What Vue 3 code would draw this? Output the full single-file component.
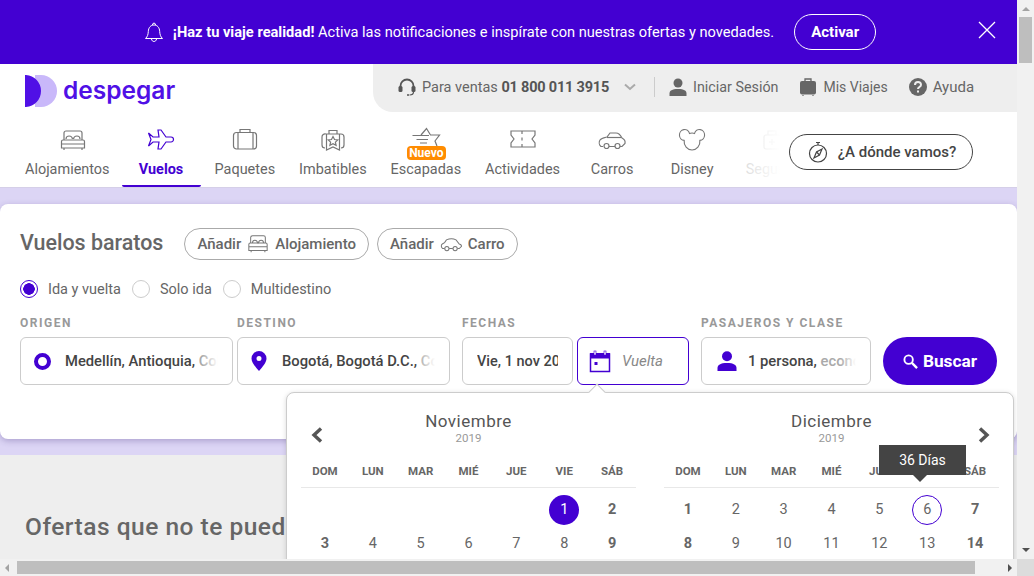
<script setup>
const tabs = [
  { id: 'bed', label: 'Alojamientos' },
  { id: 'plane', label: 'Vuelos', active: true },
  { id: 'case', label: 'Paquetes' },
  { id: 'deal', label: 'Imbatibles' },
  { id: 'star', label: 'Escapadas', badge: 'Nuevo' },
  { id: 'ticket', label: 'Actividades' },
  { id: 'car', label: 'Carros' },
  { id: 'mouse', label: 'Disney' },
  { id: 'shield', label: 'Seguros' }
]
const head = ['DOM', 'LUN', 'MAR', 'MIÉ', 'JUE', 'VIE', 'SÁB']
const months = [
  { name: 'Noviembre', weeks: ['', '', '', '', '', '1', '2', '3', '4', '5', '6', '7', '8', '9'] },
  { name: 'Diciembre', weeks: ['1', '2', '3', '4', '5', '6', '7', '8', '9', '10', '11', '12', '13', '14'] }
]
const isBold = (i) => i % 7 === 0 || i % 7 === 6
const dayClass = (m, d, i) => ({
  bold: isBold(i),
  start: m === 0 && d === '1',
  end: m === 1 && d === '6'
})
</script>

<template>
  <div class="window">
    <div class="viewport">
      <section class="banner">
        <svg class="bell" viewBox="0 0 20 22" width="20" height="22">
          <path d="M1.5 17.500c2-2 2.600-3.600 2.800-7 .2-4 2.400-6.500 5.700-6.500s5.500 2.500 5.700 6.500c.2 3.400.8 5 2.800 7z M8.500 4c-.5-2.500 3.500-2.500 3 0 M7.500 18c.3 3.300 4.700 3.300 5 0" fill="none" stroke="#fff" stroke-width="1"/>
        </svg>
        <p class="banner-text"><b>¡Haz tu viaje realidad!</b> Activa las notificaciones e inspírate con nuestras ofertas y novedades.</p>
        <button class="activate">Activar</button>
        <svg class="close" viewBox="0 0 18 18" width="18" height="18">
          <path d="M1 1l16 16M17 1L1 17" stroke="#fff" stroke-width="1.300" fill="none"/>
        </svg>
      </section>

      <header class="top">
        <div class="logo">
          <svg viewBox="0 0 32 32" width="32" height="32">
            <path d="M10 0h6a16 16 0 0 1 0 32h-6z" fill="#c9b8fa"/>
            <path d="M0 0h1a16 16 0 0 1 15 16a16 16 0 0 1-15 16H0z" fill="#5010e6"/>
          </svg>
          <span class="logo-word">despegar</span>
        </div>
        <div class="utility">
          <svg class="u-icon" viewBox="0 0 18 18" width="18" height="18">
            <path d="M2.500 9.500V8a6.500 6.500 0 0 1 13 0v1.500" fill="none" stroke="#555" stroke-width="1.800"/>
            <rect x="0.500" y="8" width="4" height="6" rx="1.500" fill="#555"/>
            <rect x="13.500" y="8" width="4" height="6" rx="1.500" fill="#555"/>
            <path d="M15.500 14c0 2-1.500 3-4 3" fill="none" stroke="#555" stroke-width="1.200"/>
            <circle cx="10" cy="17" r="1" fill="#555"/>
          </svg>
          <span class="sales">Para ventas <b>01 800 011 3915</b></span>
          <svg class="chev" viewBox="0 0 12 8" width="12" height="8"><path d="M1 1.500l5 4.500 5-4.500" fill="none" stroke="#aaa" stroke-width="2"/></svg>
          <i class="divider"></i>
          <svg class="u-icon" viewBox="0 0 18 18" width="18" height="18">
            <circle cx="9" cy="5" r="4.500" fill="#666"/>
            <path d="M.500 18v-2.500c0-3 2.500-4.500 8.500-4.500s8.500 1.500 8.500 4.500V18z" fill="#666"/>
          </svg>
          <span class="u-link login">Iniciar Sesión</span>
          <svg class="u-icon" viewBox="0 0 18 18" width="18" height="18">
            <path d="M6 3V1h6v2" fill="none" stroke="#666" stroke-width="1.300"/>
            <rect x="1" y="3" width="16" height="13.500" rx="2" fill="#666"/>
            <path d="M4 17v1M14 17v1" stroke="#666" stroke-width="1.200"/>
          </svg>
          <span class="u-link trips">Mis Viajes</span>
          <svg class="u-icon" viewBox="0 0 18 18" width="18" height="18">
            <circle cx="9" cy="9" r="9" fill="#666"/>
            <path d="M6 7c0-4 6-4 6-.300 0 2.300-3 2.300-3 4.300" fill="none" stroke="#eee" stroke-width="2"/>
            <rect x="8" y="12.500" width="2" height="2" fill="#eee"/>
          </svg>
          <span class="u-link help">Ayuda</span>
        </div>
      </header>

      <nav class="nav">
        <div class="tabs">
          <a v-for="t in tabs" :key="t.id" class="tab" :class="{ active: t.active }">
            <span class="tab-icon" :class="'i-' + t.id">
              <svg viewBox="0 0 28 22" width="28" height="22" fill="none" stroke="currentColor" stroke-width="1.200">
                <template v-if="t.id === 'bed'">
                  <path d="M5 11V4a2 2 0 0 1 2-2h14a2 2 0 0 1 2 2v7"/>
                  <path d="M7 10c0-4 6-4 6.500 0M14.500 10c.5-4 6.500-4 6.500 0"/>
                  <path d="M2.500 12.500a1.500 1.500 0 0 1 1.500-1.500h20a1.500 1.500 0 0 1 1.500 1.500V19h-23zM2.500 15h23"/>
                  <path d="M5 19v2M23 19v2"/>
                </template>
                <template v-else-if="t.id === 'plane'">
                  <path d="M1.500 4L6 8h6L11 1h3l5 7h5c2 0 2.500 1.500 2.500 2.500S25.500 13 24 13h-5l-5 7h-3l1-7H6l-4.500 4L4 10.500z"/>
                </template>
                <template v-else-if="t.id === 'case'">
                  <rect x="2.500" y="3.500" width="23" height="16.500" rx="3"/>
                  <path d="M9 3.500V.5h10v3M7 3.500V20M22 3.500V20"/>
                </template>
                <template v-else-if="t.id === 'deal'">
                  <path d="M7 5h15a3 3 0 0 1 3 3v8a3 3 0 0 1-3 3M7 5a3 3 0 0 0-4 3v8a3 3 0 0 0 3 3"/>
                  <path d="M10 5V1.500h8V5M7.500 5v16l6.500-3 6.500 3V5"/>
                  <path d="M14 7.500l1.500 3 3.300.4-2.400 2.200.7 3.300-3.100-1.700-3.100 1.700.7-3.300-2.400-2.200 3.300-.4z"/>
                </template>
                <template v-else-if="t.id === 'star'">
                  <path d="M.5 7.500H17M4.500 11.500H16M8 15h7"/>
                  <path d="M9 7l5.500-6.500L18.500 7h9L23 13l2 5"/>
                </template>
                <template v-else-if="t.id === 'ticket'">
                  <path d="M2 2h24v4l-3 4 3 4v4H2v-4l3-4-3-4z"/>
                  <path d="M13 2v3M13 8.500v3M13 15v3"/>
                </template>
                <template v-else-if="t.id === 'car'">
                  <path d="M5 17.500H3C1 16 .8 13 2 11c1.500-2 5-2.500 7-3l3-4h6c3 0 5 3 6 5 2 1 3.500 3 3 5.500l-3 3h-2M11 17.500h6"/>
                  <circle cx="8.500" cy="17" r="2.500"/><circle cx="19.500" cy="17" r="2.500"/>
                  <path d="M9 8.500h14"/>
                </template>
                <template v-else-if="t.id === 'mouse'">
                  <g transform="translate(1 0) scale(.93 1)">
                    <path d="M5.560 11.470A5.500 5.500 0 1 1 11.260 4.450A8.500 8.500 0 0 1 16.740 4.450A5.500 5.500 0 1 1 22.440 11.470A8.500 8.500 0 1 1 5.560 11.470Z"/>
                  </g>
                </template>
                <template v-else>
                  <rect x="6" y="6" width="16" height="14" rx="2"/><path d="M10 6V2h8v4M14 10v6M11 13h6"/>
                </template>
              </svg>
              <em v-if="t.badge" class="badge">{{ t.badge }}</em>
            </span>
            <span class="tab-label">{{ t.label }}</span>
          </a>
          <i class="tabs-fade"></i>
        </div>
        <button class="where">
          <svg viewBox="0 0 20 22" width="20" height="22" fill="none" stroke="#444" stroke-width="1.200">
            <circle cx="10" cy="12.500" r="8.500"/>
            <path d="M8 1.500h4M10 1.500v2.500"/>
            <path d="M14 8l-2.500 6L6 17l2.500-6z"/>
            <path d="M8.500 11l3 3"/>
          </svg>
          ¿A dónde vamos?
        </button>
      </nav>

      <div class="band">
        <section class="card">
          <div class="title-row">
            <h1>Vuelos baratos</h1>
            <button class="add">Añadir
              <svg viewBox="0 0 24 20" width="22" height="20" fill="none" stroke="#777" stroke-width="1.100">
                <path d="M4 9V3a2 2 0 0 1 2-2h12a2 2 0 0 1 2 2v6M6 9c0-4 5-4 5.500 0M12.500 9c.5-4 5.500-4 5.500 0"/>
                <path d="M2 10.500A1.500 1.500 0 0 1 3.500 9h17a1.500 1.500 0 0 1 1.500 1.500V17H2zM2 13h20M4.500 17v2M19.500 17v2"/>
              </svg>
              Alojamiento</button>
            <button class="add">Añadir
              <svg viewBox="0 0 24 16" width="22" height="16" fill="none" stroke="#777" stroke-width="1.100">
                <path d="M5 13H3C1 11.500 1 9 2.500 8L5 6.500l2-3c3.500-1.500 7.500-1.500 10.500 0L21 8c1.500.4 2.500 1.500 2.500 2.500L21 13h-2M10 13h4"/>
                <circle cx="7.500" cy="13" r="2.300"/><circle cx="16.500" cy="13" r="2.300"/>
              </svg>
              Carro</button>
          </div>

          <div class="radios">
            <label class="radio on"><i></i>Ida y vuelta</label>
            <label class="radio"><i></i>Solo ida</label>
            <label class="radio"><i></i>Multidestino</label>
          </div>

          <div class="form">
            <div class="group w-origin">
              <span class="caption">ORIGEN</span>
              <div class="field">
                <i class="ring"></i>
                <span class="value">Medellín, Antioquia, <s>Colombia</s></span>
              </div>
            </div>
            <div class="group w-origin near">
              <span class="caption">DESTINO</span>
              <div class="field">
                <svg viewBox="0 0 16 20" width="16" height="20"><path fill-rule="evenodd" d="M8 0a7.500 7.500 0 0 1 7.500 7.500c0 4-4 8.500-7.500 12.500C4.500 16 .5 11.500.5 7.500A7.500 7.500 0 0 1 8 0zm0 5a2.500 2.500 0 1 0 0 5 2.500 2.500 0 0 0 0-5z" fill="#4300d2"/></svg>
                <span class="value">Bogotá, Bogotá D.C., <s>Colombia</s></span>
              </div>
            </div>
            <div class="group w-date1 gap">
              <span class="caption">FECHAS</span>
              <div class="field date"><span class="value plain">Vie, 1 nov 2019</span></div>
            </div>
            <div class="group w-date near">
              <span class="caption">&nbsp;</span>
              <div class="field date focus">
                <svg viewBox="0 0 22 23" width="22" height="23">
                  <rect x="1.500" y="4" width="19" height="17.500" fill="none" stroke="#4300d2" stroke-width="1.500"/>
                  <rect x="1" y="3" width="20" height="5.500" fill="#4300d2"/>
                  <rect x="5" y="1" width="2" height="4" fill="#fff" stroke="#4300d2" stroke-width=".6"/>
                  <rect x="15" y="1" width="2" height="4" fill="#fff" stroke="#4300d2" stroke-width=".6"/>
                  <rect x="5.500" y="12" width="3" height="3" fill="#4300d2"/>
                </svg>
                <em class="placeholder">Vuelta</em>
                <i class="notch"></i>
              </div>
            </div>
            <div class="group w-pax gap">
              <span class="caption">PASAJEROS Y CLASE</span>
              <div class="field pax">
                <svg viewBox="0 0 20 20" width="20" height="20">
                  <circle cx="10" cy="5.200" r="5" fill="#4300d2"/>
                  <path d="M.5 20v-3c0-3 3-5 9.500-5s9.500 2 9.500 5v3z" fill="#4300d2"/>
                </svg>
                <span class="value">1 persona, <s>económica</s></span>
              </div>
            </div>
            <button class="search">
              <svg viewBox="0 0 16 16" width="15" height="15" fill="none" stroke="#fff" stroke-width="2">
                <circle cx="6" cy="6" r="4.500"/><path d="M9.500 9.500l5.500 5.500" stroke-width="2.500"/>
              </svg>
              Buscar
            </button>
          </div>
        </section>
      </div>

      <section class="deals"><h2>Ofertas que no te puedes perder</h2></section>

      <aside class="calendar">
        <svg class="prev" viewBox="0 0 12 16" width="12" height="16"><path d="M10 1.500L3 8l7 6.500" fill="none" stroke="#555" stroke-width="3.400"/></svg>
        <svg class="next" viewBox="0 0 12 16" width="12" height="16"><path d="M2 1.500L9 8l-7 6.500" fill="none" stroke="#555" stroke-width="3.400"/></svg>
        <div v-for="(m, mi) in months" :key="m.name" class="month">
          <div class="month-name">{{ m.name }}</div>
          <div class="month-year">2019</div>
          <div class="week-head"><span v-for="h in head" :key="h">{{ h }}</span></div>
          <div class="days">
            <span v-for="(d, i) in m.weeks" :key="i" class="day" :class="dayClass(mi, d, i)"><b>{{ d }}</b></span>
          </div>
        </div>
        <div class="tooltip">36 Días</div>
      </aside>
    </div>

    <div class="sb-v">
      <i class="arrow up"></i>
      <i class="thumb-v"></i>
      <i class="arrow down"></i>
    </div>
    <div class="sb-h">
      <i class="arrow left"></i>
      <i class="thumb-h"></i>
      <i class="arrow right"></i>
    </div>
    <div class="corner"></div>
  </div>
</template>

<style>
html, body { margin: 0; overflow: hidden; }
</style>

<style scoped>
* { box-sizing: border-box; }
.window {
  width: 1034px; height: 576px; overflow: hidden;
  display: grid; grid-template-columns: 1017px 17px; grid-template-rows: 559px 17px;
  font-family: Roboto, "Liberation Sans", sans-serif; color: #666; font-size: 15px;
}
.viewport { position: relative; overflow: hidden; background: #eee; }
button { font-family: inherit; background: none; cursor: pointer; }

.banner { height: 64px; background: #4300d2; color: #fff; display: flex; align-items: center; justify-content: center; position: relative; padding-left: 3px; }
.bell { margin-right: 9px; }
.banner-text { margin: 0 20px 0 0; font-size: 14.63px; }
.banner-text b { font-weight: 700; }
.activate { width: 82px; height: 36px; border: 1px solid #fff; border-radius: 18px; color: #fff; font-size: 15px; font-weight: 700; padding: 0; }
.close { position: absolute; left: 978px; top: 21px; }

.top { height: 48px; display: flex; background: #fff; }
.logo { width: 373px; padding: 11px 0 0 25px; display: flex; gap: 6px; align-items: flex-start; }
.logo-word { font-family: Inter, sans-serif; font-weight: 600; font-size: 24.5px; line-height: 30px; color: #5010e6; }
.utility { flex: 1; background: #eee; border-bottom-left-radius: 20px; display: flex; align-items: center; padding: 0 0 2px 25px; font-size: 14.3px; }
.u-icon { flex: none; }
.sales { margin-left: 6px; font-size: 14.5px; }
.sales b { font-weight: 700; color: #555; letter-spacing: -.2px; }
.chev { margin: 0 18px 0 15px; }
.divider { width: 1px; height: 20px; background: #ccc; margin-right: 14px; }
.u-link { margin-left: 6px; }
.login { margin-right: 21px; }
.trips { margin-right: 21px; font-size: 14px; }
.help { font-size: 15px; }

.nav { height: 76px; background: #fff; display: flex; padding-left: 13px; border-bottom: 1px solid #d5cfe8; }
.tabs { width: 767px; display: flex; overflow: hidden; position: relative; }
.tab { flex: none; min-width: 80px; padding: 0 12px; height: 75px; display: flex; flex-direction: column; align-items: center; position: relative; }
.tab.active { min-width: 79px; margin-right: 2px; color: #4300d2; border-bottom: 2px solid #4300d2; border-radius: 0 0 2px 2px; }
.tab.active .tab-label { font-weight: 700; }
.tab-icon { height: 22px; margin-top: 17px; position: relative; display: block; color: #777; }
.tab-icon svg { overflow: visible; display: block; }
.i-bed { margin-left: 12px; }
.i-star { margin-top: 16px; margin-bottom: 1px; }
.active .tab-icon { color: #4300d2; }
.badge { position: absolute; left: -5px; top: 18px; width: 39px; height: 14px; border-radius: 4px; background: #ff8c00; color: #fff; font-style: normal; font-weight: 700; font-size: 12px; line-height: 14px; text-align: center; }
.tab-label { margin-top: 9px; font-size: 14.45px; line-height: 20px; white-space: nowrap; }
.tabs-fade { position: absolute; right: 0; top: 0; bottom: 1px; width: 56px; background: linear-gradient(to right, rgba(255,255,255,.65), #fff); }
.where { margin: 22px 0 0 9px; width: 184px; height: 36px; border: 1px solid #444; border-radius: 18px; color: #444; font-size: 15px; font-weight: 500; display: flex; align-items: center; justify-content: center; gap: 10px; padding: 0 0 0 2px; }

.band { height: 267px; background: #dcd5f5; padding-top: 16px; }
.card { height: 235px; background: #fff; border-radius: 8px; padding: 24px 20px 0; box-shadow: 0 2px 6px rgba(60,40,120,.3); }
.title-row { display: flex; align-items: center; height: 32px; }
h1 { margin: 0 21px 3px 0; font-size: 21.45px; font-weight: 500; color: #666; line-height: 28px; white-space: nowrap; }
.add { height: 32px; border: 1px solid #aaa; border-radius: 16px; color: #666; font-size: 15px; font-weight: 500; padding: 0 12px; display: flex; align-items: center; gap: 6px; margin-right: 8px; }
.radios { display: flex; margin-top: 19px; height: 20px; }
.radio { display: flex; align-items: center; font-size: 14.5px; margin-right: 11px; }
.radio i { width: 18px; height: 18px; border-radius: 50%; border: 1px solid #ccc; margin-right: 10px; }
.radio.on i { border-color: #4300d2; background: radial-gradient(circle, #4300d2 0 5.500px, #fff 6px); }
.form { display: flex; margin-top: 17px; }
.group { display: flex; flex-direction: column; flex: none; }
.caption { font-size: 12px; font-weight: 700; letter-spacing: 1.500px; color: #999; line-height: 14px; margin-bottom: 7px; white-space: nowrap; }
.w-origin { width: 213px; }
.w-date1 { width: 111px; }
.w-date { width: 112px; }
.w-pax { width: 170px; }
.near { margin-left: 4px; }
.gap { margin-left: 12px; }
.field { height: 48px; border: 1px solid #ccc; border-radius: 6px; display: flex; align-items: center; padding: 0 14px 0 13px; gap: 15px; position: relative; }
.field svg { flex: none; }
.ring { flex: none; width: 17px; height: 17px; border: 4px solid #4300d2; border-radius: 50%; margin-right: -1px; }
.value { flex: 1; overflow: hidden; white-space: nowrap; font-size: 14.75px; font-weight: 500; color: #444; position: relative; }
.value.plain { font-size: 14.5px; }
.value s { text-decoration: none; color: #aaa; }
.value::after { content: ""; position: absolute; right: 0; top: 0; bottom: 0; width: 16px; background: linear-gradient(to right, rgba(255,255,255,0), #fff); }
.value.plain::after { display: none; }
.date { padding: 0 14px; }
.focus { border-color: #4300d2; padding-left: 11px; gap: 11px; }
.pax { padding-left: 15px; gap: 11px; }
.placeholder { font-size: 15px; color: #888; }
.notch { position: absolute; left: 13px; bottom: -14px; width: 12px; height: 12px; background: #fff; border-left: 1px solid #ccc; border-top: 1px solid #ccc; transform: rotate(45deg); z-index: 5; }
.search { margin: 21px 0 0 12px; width: 114px; height: 48px; border: 0; border-radius: 24px; background: #4300d2; color: #fff; font-size: 17.3px; font-weight: 700; display: flex; align-items: center; justify-content: center; gap: 5px; padding: 0; }

.deals { padding: 57px 25px 0; }
h2 { margin: 0; font-size: 24.5px; font-weight: 500; letter-spacing: .5px; color: #666; line-height: 30px; white-space: nowrap; }

.calendar { position: absolute; left: 286px; top: 392px; width: 728px; height: 240px; background: #fff; border: 1px solid #ccc; border-radius: 8px; padding: 0 14px; display: flex; gap: 28px; z-index: 3; box-shadow: 0 1px 5px rgba(0,0,0,.15); }
.prev { position: absolute; left: 24px; top: 34px; }
.next { position: absolute; right: 23px; top: 34px; }
.month { width: 335px; flex: none; text-align: center; }
.month-name { margin-top: 18px; font-size: 17px; line-height: 21px; color: #555; letter-spacing: .5px; }
.month-year { font-size: 11.500px; line-height: 12px; color: #999; }
.week-head { display: grid; grid-template-columns: repeat(7, 1fr); height: 39px; margin-top: 5px; padding-top: 14px; border-bottom: 1px solid #e8e8e8; font-size: 11.500px; line-height: 16px; font-weight: 700; color: #666; }
.days { display: grid; grid-template-columns: repeat(7, 1fr); grid-auto-rows: 34px; margin-top: 5px; }
.day { display: flex; align-items: center; justify-content: center; font-size: 14.5px; color: #666; }
.day b { width: 30px; height: 30px; line-height: 30px; border-radius: 50%; font-weight: 400; }
.day.bold b { font-weight: 700; }
.day.start b { background: #4300d2; color: #fff; font-weight: 400; }
.day.end b { border: 1px solid #4300d2; line-height: 28px; }
.tooltip { position: absolute; left: 592px; top: 52px; width: 87px; height: 30px; background: #444; color: #fff; font-size: 14px; line-height: 30px; text-align: center; }
.tooltip::after { content: ""; position: absolute; left: 34px; top: 30px; border: 7px solid transparent; border-top-color: #444; border-bottom: 0; }

.sb-v { background: #f1f1f1; position: relative; }
.thumb-v { position: absolute; left: 2px; top: 17px; width: 13px; height: 46px; background: #bebebe; }
.sb-h { background: #f1f1f1; position: relative; }
.thumb-h { position: absolute; left: 17px; top: 2px; width: 958px; height: 13px; background: #bebebe; }
.corner { background: #dcdcdc; }
.arrow { position: absolute; width: 0; height: 0; border: 4px solid transparent; }
.up { left: 4.500px; top: 3px; border-bottom-color: #a3a3a3; }
.down { left: 4.500px; bottom: 3px; border-top-color: #505050; }
.left { left: 1px; top: 4.500px; border-right-color: #a3a3a3; }
.right { right: 1px; top: 4.500px; border-left-color: #505050; }
</style>
